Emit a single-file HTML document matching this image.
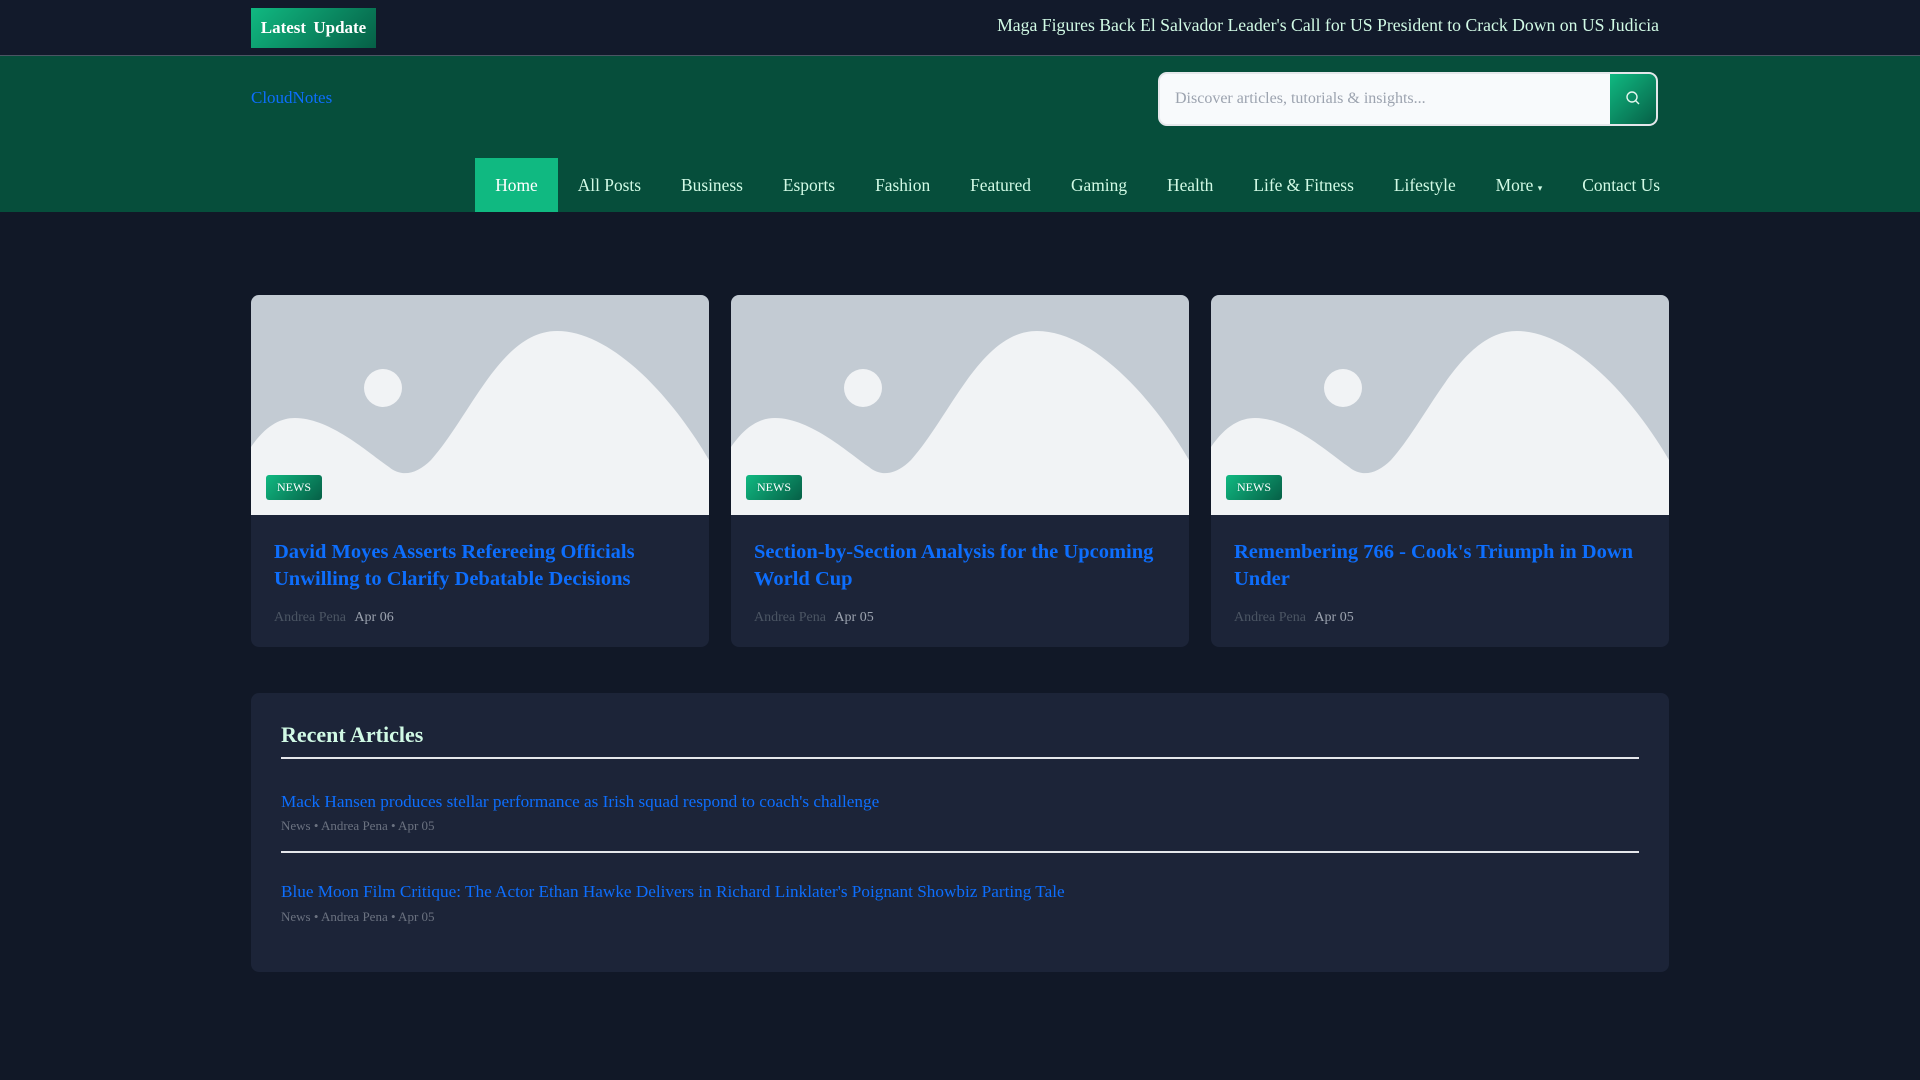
<!DOCTYPE html>
<html><head><meta charset="utf-8"><style>
*{box-sizing:border-box;margin:0;padding:0}
body{width:1920px;height:1080px;background:#111827;font-family:"Liberation Serif",serif;position:relative;overflow:hidden}
.top{position:absolute;left:0;top:0;width:1920px;height:56px;background:#121a2b;border-bottom:1px solid #4b5563}
.lu{position:absolute;left:251px;top:8px;width:125px;height:40px;background:linear-gradient(135deg,#10b981,#065f46);color:#fff;font-weight:bold;font-size:17px;line-height:40px;text-align:center;word-spacing:3px}
.tick{position:absolute;right:261px;top:15px;color:#d1fae5;font-size:17.7px;white-space:nowrap}
.hdr{position:absolute;left:0;top:56px;width:1920px;height:156px;background:#064e3b}
.logo{position:absolute;left:251px;top:32px;color:#0d6efd;font-size:17px}
.search{position:absolute;left:1158px;top:16px;width:500px;height:54px;background:#f8fafc;border:2px solid #e5e7eb;border-radius:9px;overflow:hidden}
.search span{position:absolute;left:15px;top:16px;color:#9ca3af;font-size:16px}
.search .btn{position:absolute;right:0;top:0;width:46px;height:50px;background:linear-gradient(135deg,#10b981,#065f46)}
.nav{position:absolute;right:240px;top:102px;height:54px;display:flex}
.nav div{padding:0 20px;line-height:54px;color:#d1fae5;font-size:17.4px;white-space:nowrap}
.nav .act{background:#10b981;color:#fff}
.card{position:absolute;top:295px;width:458px;height:352px;background:#1c2438;border-radius:8px;overflow:hidden}
.card svg{display:block}
.badge{position:absolute;left:15px;top:180px;width:56px;height:25px;border-radius:3px;background:linear-gradient(135deg,#10b981,#065f46);color:#fff;font-size:12px;line-height:25px;text-align:center}
.ct{position:absolute;left:23px;top:244px;width:420px;color:#0d6efd;font-weight:bold;font-size:20.5px;line-height:27px}
.meta{position:absolute;left:23px;top:315px;font-size:14px;color:#4b5563}
.meta b{font-weight:normal;color:#9ca3af;margin-left:5px}
.rec{position:absolute;left:251px;top:693px;width:1418px;height:279px;background:#1c2438;border-radius:8px}
.rec h2{position:absolute;left:30px;top:29px;color:#d1fae5;font-size:22px}
.ln{position:absolute;left:30px;width:1358px;height:2px;background:#e5e7eb}
.it{position:absolute;left:30px;color:#0d6efd;font-size:17.2px;white-space:nowrap}
.im{position:absolute;left:30px;color:#6b7280;font-size:13px;white-space:nowrap}
</style></head><body>
<div class="top"><div class="lu">Latest Update</div><div class="tick">Maga Figures Back El Salvador Leader's Call for US President to Crack Down on US Judicia</div></div>
<div class="hdr">
<div class="logo">CloudNotes</div>
<div class="search"><span>Discover articles, tutorials &amp; insights...</span><div class="btn"><svg width="46" height="50" viewBox="0 0 46 50"><circle cx="22" cy="23" r="5" fill="none" stroke="#e5f7ef" stroke-width="1.4"/><line x1="25.5" y1="26.5" x2="29" y2="30" stroke="#e5f7ef" stroke-width="1.4"/></svg></div></div>
<div class="nav"><div class="act">Home</div><div>All Posts</div><div>Business</div><div>Esports</div><div>Fashion</div><div>Featured</div><div>Gaming</div><div>Health</div><div>Life &amp; Fitness</div><div>Lifestyle</div><div>More <span style="font-size:9px">▾</span></div><div>Contact Us</div></div>
</div>

<div class="card" style="left:251px"><svg width="458" height="220" viewBox="0 0 458 220"><rect width="458" height="220" fill="#c3cbd3"/><circle cx="132" cy="93" r="19" fill="#f1f3f5"/><path d="M0,152 C15,130 30,123 44,123 C80,123 120,160 138,172 C150,182 165,180 180,165 C220,120 250,36 306,36 C360,36 420,100 458,165 L458,220 L0,220 Z" fill="#f1f3f5"/></svg><div class="badge">NEWS</div><div class="ct">David Moyes Asserts Refereeing Officials Unwilling to Clarify Debatable Decisions</div><div class="meta">Andrea Pena <b>Apr 06</b></div></div>
<div class="card" style="left:731px"><svg width="458" height="220" viewBox="0 0 458 220"><rect width="458" height="220" fill="#c3cbd3"/><circle cx="132" cy="93" r="19" fill="#f1f3f5"/><path d="M0,152 C15,130 30,123 44,123 C80,123 120,160 138,172 C150,182 165,180 180,165 C220,120 250,36 306,36 C360,36 420,100 458,165 L458,220 L0,220 Z" fill="#f1f3f5"/></svg><div class="badge">NEWS</div><div class="ct">Section-by-Section Analysis for the Upcoming World Cup</div><div class="meta">Andrea Pena <b>Apr 05</b></div></div>
<div class="card" style="left:1211px"><svg width="458" height="220" viewBox="0 0 458 220"><rect width="458" height="220" fill="#c3cbd3"/><circle cx="132" cy="93" r="19" fill="#f1f3f5"/><path d="M0,152 C15,130 30,123 44,123 C80,123 120,160 138,172 C150,182 165,180 180,165 C220,120 250,36 306,36 C360,36 420,100 458,165 L458,220 L0,220 Z" fill="#f1f3f5"/></svg><div class="badge">NEWS</div><div class="ct">Remembering 766 - Cook's Triumph in Down Under</div><div class="meta">Andrea Pena <b>Apr 05</b></div></div>

<div class="rec">
<h2>Recent Articles</h2>
<div class="ln" style="top:64px"></div>
<div class="it" style="top:99px">Mack Hansen produces stellar performance as Irish squad respond to coach's challenge</div>
<div class="im" style="top:125px">News • Andrea Pena • Apr 05</div>
<div class="ln" style="top:158px"></div>
<div class="it" style="top:189px">Blue Moon Film Critique: The Actor Ethan Hawke Delivers in Richard Linklater's Poignant Showbiz Parting Tale</div>
<div class="im" style="top:216px">News • Andrea Pena • Apr 05</div>
</div>
</body></html>
